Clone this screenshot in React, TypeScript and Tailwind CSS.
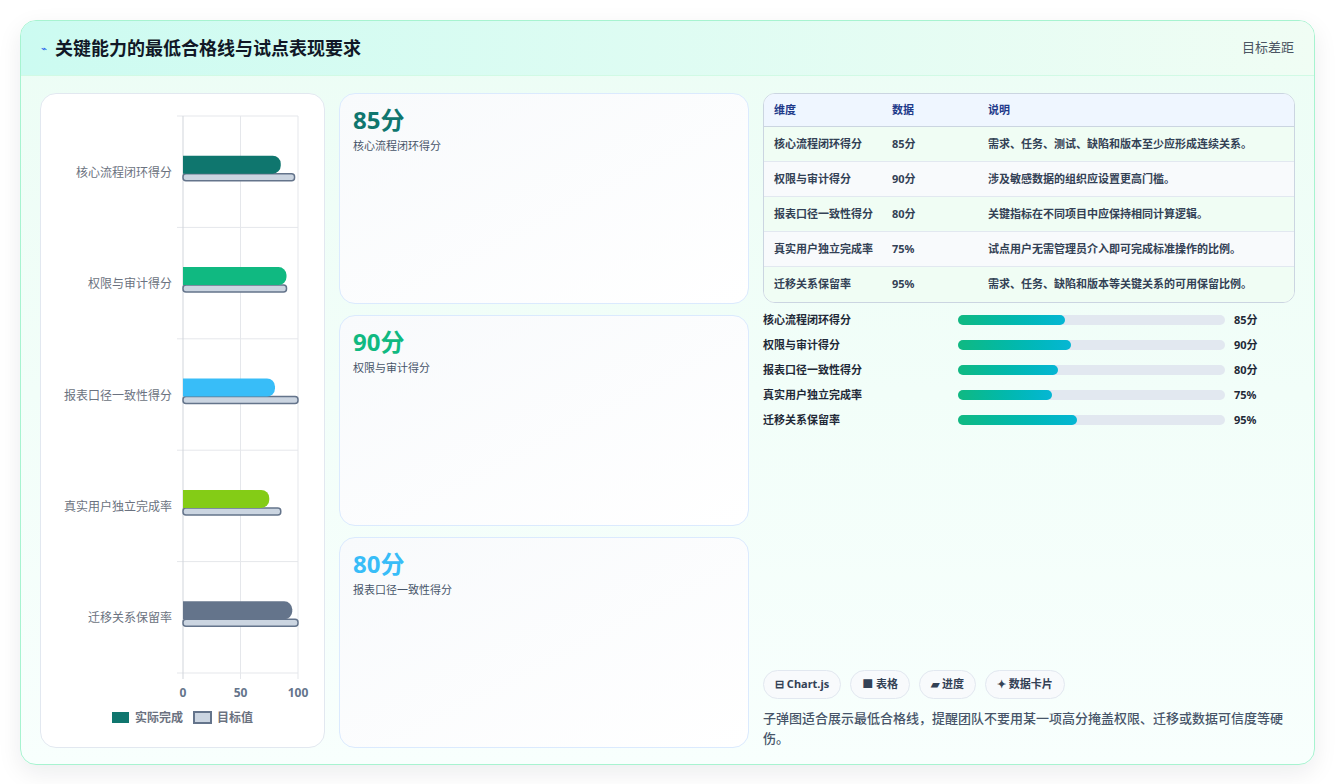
import React from "react";

const FONT = { fontFamily: '"Noto Sans", "Noto Sans CJK SC", sans-serif' };

const ROWS = [
  { name: "核心流程闭环得分", value: 85, label: "85分", target: 97, color: "#0f766e", desc: "需求、任务、测试、缺陷和版本至少应形成连续关系。" },
  { name: "权限与审计得分", value: 90, label: "90分", target: 90, color: "#10b981", desc: "涉及敏感数据的组织应设置更高门槛。" },
  { name: "报表口径一致性得分", value: 80, label: "80分", target: 100, color: "#38bdf8", desc: "关键指标在不同项目中应保持相同计算逻辑。" },
  { name: "真实用户独立完成率", value: 75, label: "75%", target: 85, color: "#84cc16", desc: "试点用户无需管理员介入即可完成标准操作的比例。" },
  { name: "迁移关系保留率", value: 95, label: "95%", target: 100, color: "#64748b", desc: "需求、任务、缺陷和版本等关键关系的可用保留比例。" },
];

function BulletChart() {
  // svg coords relative to card at (40,93)
  const x0 = 142, scale = 1.15, top = 22, band = 111.4;
  return (
    <svg width="284" height="653" className="block">
      {[0, 1, 2, 3, 4, 5].map((i) => (
        <line key={i} x1={x0 - 6} x2={x0 + 115} y1={top + i * band} y2={top + i * band} stroke="#e5e7eb" />
      ))}
      {[0, 50, 100].map((v) => (
        <g key={v}>
          <line x1={x0 + v * scale} x2={x0 + v * scale} y1={top} y2={top + 5 * band + 6} stroke={v === 0 ? "#d1d5db" : "#e5e7eb"} />
          <text x={x0 + v * scale} y={top + 5 * band + 24} textAnchor="middle" fontSize="12" fontWeight="700" fill="#64748b">{v}</text>
        </g>
      ))}
      {ROWS.map((r, i) => {
        const cy = top + i * band + band / 2;
        return (
          <g key={r.name}>
            <text x={x0 - 11} y={cy + 5} textAnchor="end" fontSize="12" fill="#6b7280">{r.name}</text>
            <rect x={x0} y={cy + 2} width={r.target * scale} height={7} rx={3} fill="#cbd5e1" stroke="#64748b" strokeWidth="1.5" />
            <path d={`M${x0} ${cy - 16} H${x0 + r.value * scale - 8} a8 8 0 0 1 8 8 v2 a8 8 0 0 1 -8 8 H${x0} Z`} fill={r.color} />
          </g>
        );
      })}
      <rect x="71" y="618" width="17" height="11" fill="#0f766e" />
      <text x="94" y="628" fontSize="12" fontWeight="700" fill="#6b7280">实际完成</text>
      <rect x="153" y="618" width="17" height="11" fill="#cbd5e1" stroke="#64748b" strokeWidth="2" />
      <text x="176" y="628" fontSize="12" fontWeight="700" fill="#6b7280">目标值</text>
    </svg>
  );
}

export default function App() {
  return (
    <div className="w-[1336px] h-[784px] bg-white p-5" style={FONT}>
      <div className="h-[745px] w-[1295px] rounded-2xl border border-[#a7f3d0] bg-gradient-to-b from-[#ecfdf5] to-[#f8fffd] shadow-[0_8px_24px_rgba(15,23,42,0.08)] overflow-hidden flex flex-col">
        <div className="h-[55px] shrink-0 flex items-center justify-between px-5 bg-gradient-to-r from-[#ccfbf1] to-[#f0fdf4] border-b border-[#d1fae5]">
          <div className="flex items-center gap-2">
            <span className="text-[#2563eb] text-[10px]">⌁</span>
            <span className="text-[18px] font-bold text-[#111827]">关键能力的最低合格线与试点表现要求</span>
          </div>
          <span className="text-[13px] text-[#4b5563]">目标差距</span>
        </div>
        <div className="flex-1 flex gap-[14px] px-[19px] pt-[17px] pb-[18px]">
          <div className="w-[285px] rounded-2xl border border-[#e2e8f0] bg-white">
            <BulletChart />
          </div>
          <div className="w-[410px] flex flex-col gap-[11px]">
            {ROWS.slice(0, 3).map((r, i) => (
              <div key={r.name} className="flex-1 rounded-2xl border border-[#dbeafe] bg-gradient-to-br from-[#f8fafc] to-white px-[13px] py-[10px]">
                <div className="text-[24px] font-bold leading-8" style={{ color: ["#0f766e", "#10b981", "#38bdf8"][i] }}>{r.label}</div>
                <div className="text-[11px] text-[#475569] mt-[2px]">{r.name}</div>
              </div>
            ))}
          </div>
          <div className="flex-1 flex flex-col">
            <div className="rounded-xl border border-[#cbd5e1] overflow-hidden bg-white text-[11px] font-bold">
              <div className="flex h-[33px] items-center bg-[#eff6ff] text-[#1e3a8a] border-b border-[#cbd5e1]">
                <div className="w-[128px] pl-[10px]">维度</div>
                <div className="w-[96px]">数据</div>
                <div className="flex-1">说明</div>
              </div>
              {ROWS.map((r, i) => (
                <div key={r.name} className={`flex h-[35px] items-center text-[#334155] ${i < 4 ? "border-b border-[#e2e8f0]" : ""} ${i % 2 === 0 ? "bg-[#f0fdf4]" : "bg-[#f8fafc]"}`}>
                  <div className="w-[128px] pl-[10px]">{r.name}</div>
                  <div className="w-[96px]">{r.label}</div>
                  <div className="flex-1">{r.desc}</div>
                </div>
              ))}
            </div>
            <div className="mt-[9px] flex flex-col gap-[9px]">
              {ROWS.map((r) => (
                <div key={r.name} className="flex items-center h-[16px] text-[11px] font-bold text-[#1f2937]">
                  <div className="w-[195px]">{r.name}</div>
                  <div className="w-[267px] h-[10px] rounded-full bg-[#e2e8f0]">
                    <div className="h-full rounded-full bg-gradient-to-r from-[#10b981] to-[#06b6d4]" style={{ width: `${r.value * 0.47}%` }} />
                  </div>
                  <div className="ml-[9px]">{r.label}</div>
                </div>
              ))}
            </div>
            <div className="mt-auto">
              <div className="flex gap-[9px] text-[11px] font-bold text-[#334155]">
                {["⊟ Chart.js", "■ 表格", "▰ 进度", "✦ 数据卡片"].map((t) => (
                  <span key={t} className="h-[29px] px-[11px] flex items-center rounded-full border border-[#e2e8f0] bg-[#f8fafc]">{t}</span>
                ))}
              </div>
              <p className="mt-[9px] text-[13px] leading-[20px] text-[#475569] font-medium">子弹图适合展示最低合格线，提醒团队不要用某一项高分掩盖权限、迁移或数据可信度等硬伤。</p>
            </div>
          </div>
        </div>
      </div>
    </div>
  );
}
